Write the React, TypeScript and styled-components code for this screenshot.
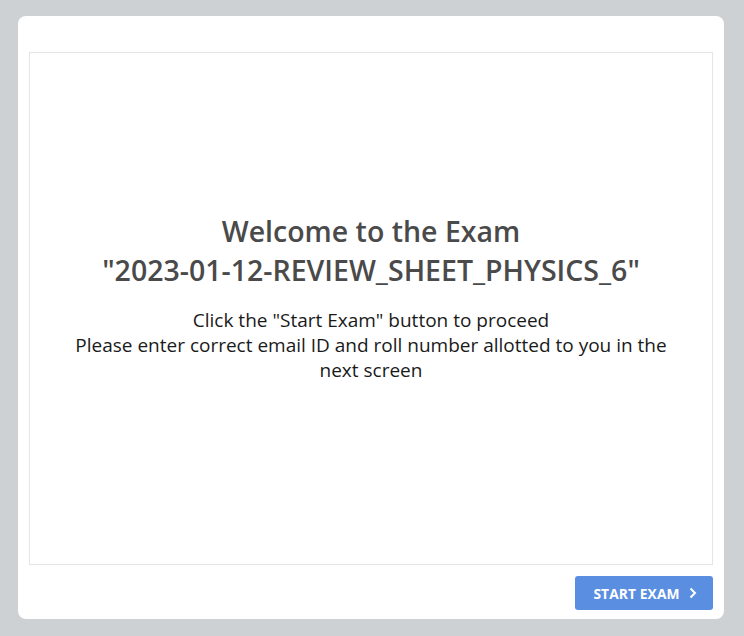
import React from "react";
import styled, { createGlobalStyle } from "styled-components";

const Global = createGlobalStyle`
  html, body { margin: 0; padding: 0; background: #cdd1d4; }
  body { font-family: "Open Sans", "Noto Sans", sans-serif; }
  * { box-sizing: border-box; }
`;

const Page = styled.div`
  width: 744px;
  height: 636px;
  padding: 16px 20px 17px 18px;
  display: flex;
`;

const Card = styled.div`
  flex: 1;
  background: #ffffff;
  border-radius: 8px;
  padding: 36px 11px 9px 11px;
  display: flex;
  flex-direction: column;
`;

const Frame = styled.div`
  height: 513px;
  border: 1px solid #e5e5e5;
  display: flex;
  flex-direction: column;
  align-items: center;
  justify-content: center;
  padding-bottom: 23px;
  text-align: center;
`;

const Title = styled.h1`
  margin: 0;
  font-size: 28.5px;
  font-weight: 600;
  line-height: 39px;
  color: #4a4a4a;
`;

const Body = styled.p`
  margin: 18px 0 0 0;
  font-size: 19px;
  line-height: 25px;
  color: #1a1a1a;
  max-width: 610px;
`;

const Footer = styled.div`
  display: flex;
  justify-content: flex-end;
  padding-top: 11px;
`;

const Button = styled.button`
  display: flex;
  align-items: center;
  gap: 9px;
  height: 34px;
  width: 138px;
  justify-content: center;
  border: none;
  border-radius: 3px;
  background: #5a8ee0;
  color: #ffffff;
  font-family: "Open Sans", sans-serif;
  font-weight: 700;
  font-size: 13.8px;
  letter-spacing: 0.1px;
  padding: 0 0 0 2px;
`;

export default function App() {
  return (
    <>
      <Global />
      <Page>
        <Card>
          <Frame>
            <Title>
              Welcome to the Exam
              <br />
              "2023-01-12-REVIEW_SHEET_PHYSICS_6"
            </Title>
            <Body>
              Click the "Start Exam" button to proceed
              <br />
              Please enter correct email ID and roll number allotted to you in the next screen
            </Body>
          </Frame>
          <Footer>
            <Button>
              START EXAM
              <svg width="8" height="12" viewBox="0 0 8 12">
                <path d="M1.5 1.5 L6 6 L1.5 10.5" stroke="#fff" strokeWidth="2" fill="none" />
              </svg>
            </Button>
          </Footer>
        </Card>
      </Page>
    </>
  );
}
